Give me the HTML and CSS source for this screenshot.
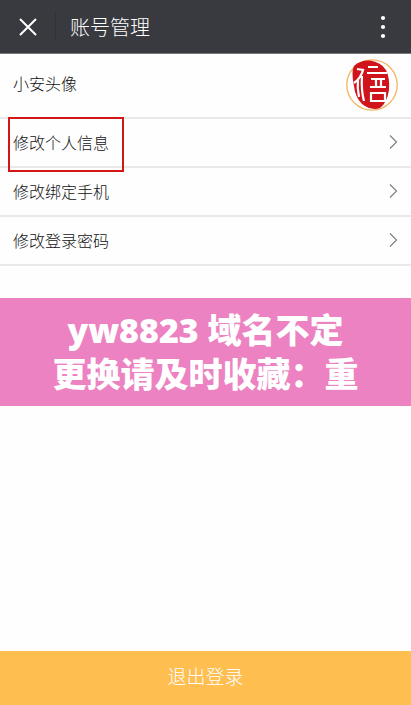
FILE: index.html
```html
<!DOCTYPE html>
<html lang="zh-CN">
<head>
<meta charset="utf-8">
<meta name="viewport" content="width=device-width, initial-scale=1">
<title>账号管理</title>
<link rel="stylesheet" href="styles.css">
</head>
<body>
<header class="topbar">
  <button class="icon-button close" type="button" aria-label="关闭">
    <svg width="18" height="18" viewBox="0 0 18 18" aria-hidden="true"><path d="M1 1 17 17M17 1 1 17"/></svg>
  </button>
  <h1 class="title">账号管理</h1>
  <button class="icon-button more" type="button" aria-label="更多">
    <svg width="6" height="24" viewBox="0 0 6 24" aria-hidden="true"><circle cx="3" cy="3" r="2.1"/><circle cx="3" cy="12" r="2.1"/><circle cx="3" cy="21" r="2.1"/></svg>
  </button>
</header>
<main class="content">
  <nav class="list">
    <a class="row profile" href="#avatar"><span>小安头像</span>
      <svg class="avatar" width="52" height="52" viewBox="0 0 52 52" aria-hidden="true">
        <circle class="ring" cx="26" cy="26" r="25.2"/>
        <path class="seal" d="M8 7Q14 1 24 1.500Q35 3 40 11Q44 19 43 31Q41 44 34 49Q25 52 16 45Q9 38 8 27Q5 13 8 7Z"/>
        <g class="mark">
          <path d="M11 10 17 11Q15 19 8 24M12 21Q11 29 13 38M16 17Q15 31 18 42"/>
          <path d="M22 8H32M21 14H41M25 20H39M30 20V28M35 20V28M24 28H40M25 34H39V42H25Z"/>
        </g>
      </svg>
    </a>
    <a class="row" href="#info"><span class="highlight">修改个人信息</span><svg class="chevron" width="9" height="14" viewBox="0 0 9 14" aria-hidden="true"><path d="M1 .5 7.5 7 1 13.5"/></svg></a>
    <a class="row" href="#phone"><span>修改绑定手机</span><svg class="chevron" width="9" height="14" viewBox="0 0 9 14" aria-hidden="true"><path d="M1 .5 7.5 7 1 13.5"/></svg></a>
    <a class="row" href="#password"><span>修改登录密码</span><svg class="chevron" width="9" height="14" viewBox="0 0 9 14" aria-hidden="true"><path d="M1 .5 7.5 7 1 13.5"/></svg></a>
  </nav>
  <p class="banner">yw8823 域名不定<br>更换请及时收藏：重</p>
</main>
<button class="logout" type="button">退出登录</button>
</body>
</html>
```

FILE: styles.css
```css
* { box-sizing: border-box; }
body {
  margin: 0;
  min-height: 100vh;
  display: flex;
  flex-direction: column;
  background: #fefefe;
  color: #111;
  font-family: "Noto Sans CJK SC", sans-serif;
  font-size: 16px;
  font-weight: 300;
}
button { border: 0; padding: 0; font: inherit; }
.topbar {
  height: 54px;
  display: flex;
  align-items: center;
  background: #393a3f;
  border-bottom: 1px solid #77787b;
  color: #fff;
}
.icon-button {
  height: 28px;
  display: flex;
  align-items: center;
  justify-content: center;
  background: none;
}
.close {
  width: 56px;
  border-right: 1px solid #303136;
}
.close path { fill: none; stroke: #fff; stroke-width: 2; }
.title {
  flex: 1;
  margin: 0;
  padding-left: 14px;
  font-size: 20px;
  line-height: 28px;
  font-weight: 300;
}
.more { width: 56px; }
.more circle { fill: #fff; }
.row {
  height: 49px;
  padding: 0 13px 2px;
  display: flex;
  align-items: center;
  justify-content: space-between;
  border-bottom: 2px solid #e9e9e9;
  color: inherit;
  text-decoration: none;
}
.profile {
  height: 65px;
}
.profile span { padding-bottom: 3px; }
.chevron path { fill: none; stroke: #808080; stroke-width: 1.2; }
.ring { fill: #fff; stroke: #f3b560; stroke-width: 1.3; }
.seal { fill: #cf151b; }
.mark { fill: none; stroke: #fff; stroke-width: 2.2; }
.highlight { position: relative; }
.highlight::after {
  content: "";
  position: absolute;
  inset: -13px -15px -18px -5px;
  border: 2px solid #d21616;
}
.banner {
  margin: 32px 0;
  padding: 10px 0;
  background: #ec82c1;
  color: #fff;
  font-family: "Noto Sans", "Noto Sans CJK SC", sans-serif;
  font-size: 34px;
  line-height: 44px;
  font-weight: 900;
  text-align: center;
}
.logout {
  height: 54px;
  margin-top: auto;
  padding-bottom: 5px;
  background: #ffbe50;
  color: #fff;
  font-size: 19px;
}
```
